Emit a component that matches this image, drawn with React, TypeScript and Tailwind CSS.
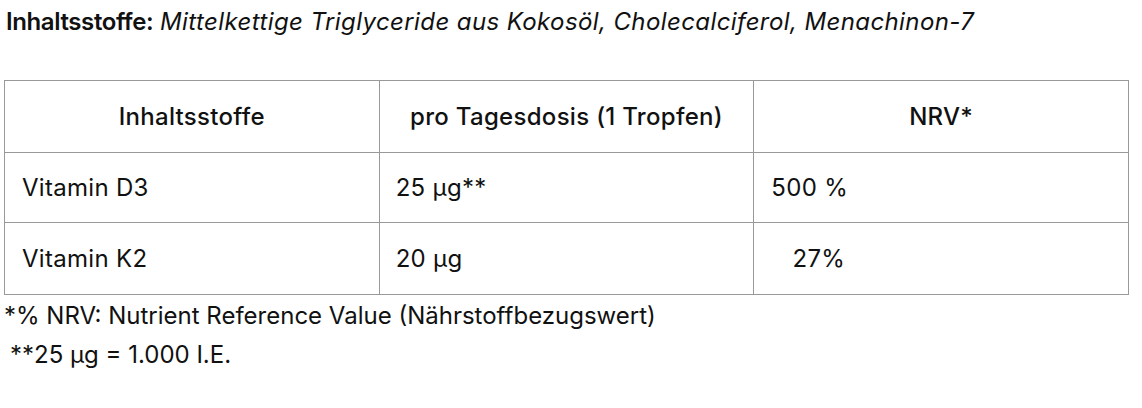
import React from 'react';

const rows = [
  { name: 'Vitamin D3', dose: '25 µg**', nrv: '500 %' },
  { name: 'Vitamin K2', dose: '20 µg', nrv: '\u00a0\u00a0\u00a027%' },
];

export default function App() {
  return (
    <div className="w-[1142px] h-[408px] bg-white text-[#111] font-[Inter,sans-serif] text-[24px] leading-[30px]">
      {/* Ingredients line */}
      <p className="pl-[6px] pt-[7px]">
        <span className="font-semibold tracking-[-0.4px]">Inhaltsstoffe:</span>{' '}
        <span className="italic tracking-[0.4px]">Mittelkettige Triglyceride aus Kokosöl, Cholecalciferol, Menachinon-7</span>
      </p>

      {/* Nutrition table */}
      <table className="mt-[43px] ml-[4px] w-[1125px] border-collapse table-fixed tracking-[0.3px]">
        <thead>
          <tr className="h-[72px]">
            <th className="border border-[#999] font-medium text-center">Inhaltsstoffe</th>
            <th className="border border-[#999] font-medium text-center">pro Tagesdosis (1 Tropfen)</th>
            <th className="border border-[#999] font-medium text-center">NRV*</th>
          </tr>
        </thead>
        <tbody>
          {rows.map((r, i) => (
            <tr key={r.name} className={i === 0 ? 'h-[70px]' : 'h-[72px]'}>
              <td className="border border-[#999] pl-[17px]">{r.name}</td>
              <td className="border border-[#999] pl-[16px]">{r.dose}</td>
              <td className="border border-[#999] pl-[17px] whitespace-pre">{r.nrv}</td>
            </tr>
          ))}
        </tbody>
      </table>

      {/* Footnotes */}
      <p className="pl-[4px] mt-[6px]">*% NRV: Nutrient Reference Value (Nährstoffbezugswert)</p>
      <p className="pl-[10px] mt-[9px]">**25 µg = 1.000 I.E.</p>
    </div>
  );
}
